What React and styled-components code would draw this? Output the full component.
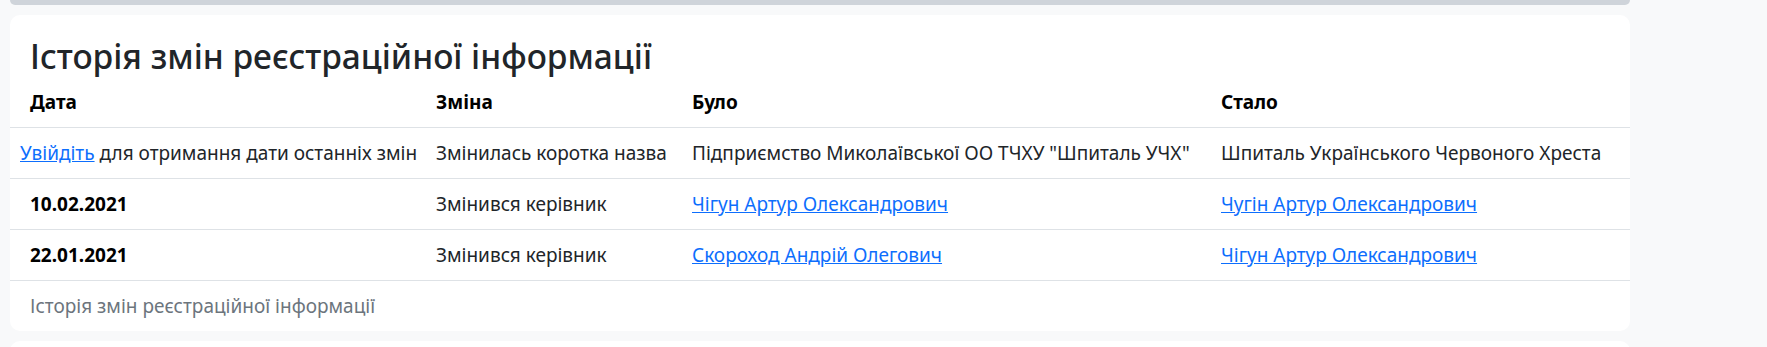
import React from 'react'
import styled, { createGlobalStyle } from 'styled-components'

const GlobalStyle = createGlobalStyle`
  body {
    margin: 0;
    background: #f8f9fa;
    font-family: "Noto Sans", "Open Sans", sans-serif;
    font-size: 19px;
    line-height: 30px;
    color: #212529;
  }
`

const Page = styled.div`
  padding: 0 137px 0 10px;
  height: 347px;
  overflow: hidden;
`

const PrevCardEdge = styled.div`
  height: 5px;
  background: #cfd4da;
  border-radius: 0 0 10px 10px;
`

const Card = styled.div`
  margin-top: 10px;
  background: #fff;
  border-radius: 10px;
  overflow: hidden;
`

const Title = styled.h3`
  margin: 0;
  padding: 20px 20px 0;
  font-size: 33.5px;
  font-weight: 500;
  line-height: 42px;
  color: #212529;
`

const Table = styled.table`
  width: 100%;
  border-collapse: collapse;
  table-layout: fixed;
`

const Caption = styled.caption`
  caption-side: bottom;
  text-align: left;
  padding: 10px 20px;
  color: #6c757d;
`

const HeadCell = styled.th`
  padding: 10px;
  padding-left: ${(p) => (p.$wide ? '20px' : '10px')};
  text-align: left;
  font-weight: 700;
  color: #000;
  border-bottom: 1px solid #dee2e6;
  white-space: nowrap;
`

const Cell = styled.td`
  padding: 10px;
  border-bottom: 1px solid #dee2e6;
  white-space: nowrap;
`

const Link = styled.a`
  color: #0d6efd;
  text-decoration: underline;
`

const columns = [
  { label: 'Дата', width: 416 },
  { label: 'Зміна', width: 256 },
  { label: 'Було', width: 529 },
  { label: 'Стало', width: 419 },
]

const rows = [
  { date: '10.02.2021', change: 'Змінився керівник', was: 'Чігун Артур Олександрович', now: 'Чугін Артур Олександрович' },
  { date: '22.01.2021', change: 'Змінився керівник', was: 'Скороход Андрій Олегович', now: 'Чігун Артур Олександрович' },
]

const App = () => {
  const title = 'Історія змін реєстраційної інформації'
  return (
    <Page>
      <GlobalStyle />
      <PrevCardEdge />
      <Card>
        <Title>{title}</Title>
        <Table>
          <Caption>{title}</Caption>
          <colgroup>
            {columns.map((c) => (
              <col key={c.label} style={{ width: c.width }} />
            ))}
          </colgroup>
          <thead>
            <tr>
              {columns.map((c, i) => (
                <HeadCell key={c.label} $wide={i === 0}>
                  {c.label}
                </HeadCell>
              ))}
            </tr>
          </thead>
          <tbody>
            <tr>
              <Cell>
                <Link href="#">Увійдіть</Link> для отримання дати останніх змін
              </Cell>
              <Cell>Змінилась коротка назва</Cell>
              <Cell>Підприємство Миколаївської ОО ТЧХУ "Шпиталь УЧХ"</Cell>
              <Cell>Шпиталь Українського Червоного Хреста</Cell>
            </tr>
            {rows.map((r) => (
              <tr key={r.date}>
                <HeadCell scope="row" $wide>
                  {r.date}
                </HeadCell>
                <Cell>{r.change}</Cell>
                <Cell>
                  <Link href="#">{r.was}</Link>
                </Cell>
                <Cell>
                  <Link href="#">{r.now}</Link>
                </Cell>
              </tr>
            ))}
          </tbody>
        </Table>
      </Card>
      <Card>&nbsp;</Card>
    </Page>
  )
}

export default App
